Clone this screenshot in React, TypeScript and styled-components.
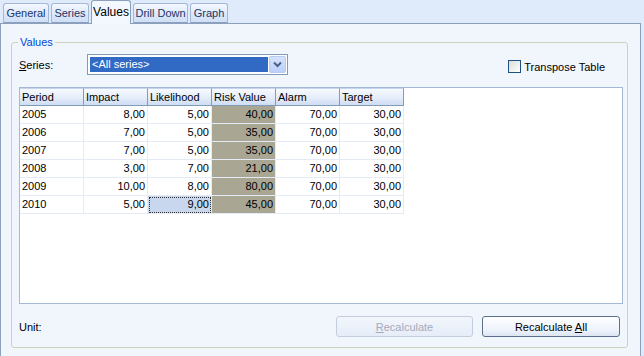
import styled, { createGlobalStyle } from "styled-components";

const GlobalStyle = createGlobalStyle`
  html, body {
    margin: 0;
    padding: 0;
    background: #dfeafb;
  }
  body {
    font-family: "Liberation Sans", Arial, sans-serif;
    font-size: 11px;
    color: #000;
  }
`;

const Window = styled.div`
  width: 644px;
  height: 356px;
  display: flex;
  flex-direction: column;
  background: #dfeafb;
  overflow: hidden;
`;

const TabStrip = styled.div`
  display: flex;
  align-items: flex-end;
  gap: 2px;
  height: 23px;
  padding-left: 3px;
  position: relative;
  z-index: 1;
`;

const Tab = styled.div<{ $w: number; $active?: boolean }>`
  box-sizing: border-box;
  width: ${(p) => p.$w}px;
  height: ${(p) => (p.$active ? 24 : 20)}px;
  margin-bottom: ${(p) => (p.$active ? -1 : 0)}px;
  display: flex;
  align-items: center;
  justify-content: center;
  padding-bottom: ${(p) => (p.$active ? 2 : 0)}px;
  border: 1px solid ${(p) => (p.$active ? "#8c9fbd" : "#a3b8d6")};
  border-bottom: ${(p) => (p.$active ? "none" : "1px solid #8c9fbd")};
  border-radius: 3px 3px 0 0;
  background: ${(p) =>
    p.$active
      ? "#f3f7fe"
      : "linear-gradient(#f4f8fe, #dbe7f9 60%, #cfdff6)"};
  color: ${(p) => (p.$active ? "#000" : "#1c3466")};
  font-size: ${(p) => (p.$active ? 12 : 11)}px;
`;

const Panel = styled.div`
  flex: 1;
  margin-right: 3px;
  background: #f1f6fd;
  border: 1px solid #8c9fbd;
  border-bottom: none;
  display: flex;
  flex-direction: column;
`;

const Group = styled.div`
  position: relative;
  margin: 18px 12px 0 10px;
  height: 306px;
  box-sizing: border-box;
  border: 1px solid #d0d0bf;
  border-radius: 3px;
  padding: 11px 0 0 7px;
  display: flex;
  flex-direction: column;
`;

const Legend = styled.span`
  position: absolute;
  top: -7px;
  left: 6px;
  padding: 0 2px;
  background: #f1f6fd;
  color: #0046d5;
  line-height: 13px;
`;

const SeriesRow = styled.div`
  display: flex;
  align-items: center;
  height: 21px;
`;

const FieldLabel = styled.label`
  width: 68px;
`;

const Combo = styled.div`
  box-sizing: border-box;
  width: 201px;
  height: 21px;
  border: 1px solid #7f9db9;
  background: #fff;
  display: flex;
  align-items: center;
  padding: 1px;
  gap: 1px;
`;

const ComboText = styled.div`
  flex: 1;
  height: 15px;
  margin-left: 1px;
  background: #316ac5;
  color: #fff;
  line-height: 15px;
  padding-left: 2px;
`;

const ComboButton = styled.div`
  box-sizing: border-box;
  width: 17px;
  height: 17px;
  border: 1px solid #b9cbf3;
  border-radius: 2px;
  background: linear-gradient(#d6e2fd, #bccffa);
  display: flex;
  align-items: center;
  justify-content: center;
`;

const CheckWrap = styled.label`
  margin-left: auto;
  margin-right: 22px;
  padding-top: 4px;
  display: flex;
  align-items: center;
  gap: 3px;
`;

const CheckBox = styled.span`
  box-sizing: border-box;
  width: 13px;
  height: 13px;
  border: 1px solid #1c5180;
  background: linear-gradient(135deg, #dcdcd7, #fff);
`;

const Grid = styled.div`
  box-sizing: border-box;
  margin-top: 12px;
  width: 604px;
  height: 217px;
  border: 1px solid #a5b9d5;
  background: #fff;
`;

const Row = styled.div`
  display: flex;
  height: 18px;
`;

const HeadCell = styled.div`
  box-sizing: border-box;
  width: 64px;
  height: 18px;
  border-right: 1px solid #7f9db9;
  border-bottom: 1px solid #7f9db9;
  border-top: 1px solid #c5d5ee;
  background: linear-gradient(#f7fafe, #e2ebf9 60%, #cfdcf3);
  padding-left: 2px;
  line-height: 16px;
`;

const Cell = styled.div<{ $kind?: "risk" | "sel"; $left?: boolean }>`
  box-sizing: border-box;
  width: 64px;
  height: 18px;
  line-height: 17px;
  text-align: ${(p) => (p.$left ? "left" : "right")};
  padding: ${(p) => (p.$left ? "0 0 0 2px" : "0 2px 0 0")};
  border-right: 1px solid #e4ebf6;
  border-bottom: 1px solid #e4ebf6;
  background: ${(p) =>
    p.$kind === "risk" ? "#a9a694" : p.$kind === "sel" ? "#c8d7ee" : "#fff"};
  outline: ${(p) => (p.$kind === "sel" ? "1px dotted #333" : "none")};
  outline-offset: -2px;
`;

const BottomRow = styled.div`
  display: flex;
  align-items: center;
  margin-top: 12px;
  height: 21px;
  padding-right: 7px;
`;

const Unit = styled.span`
  flex: 1;
`;

const Button = styled.button<{ $w: number }>`
  box-sizing: border-box;
  width: ${(p) => p.$w}px;
  height: 21px;
  margin-left: 9px;
  font: inherit;
  border: 1px solid #5c708e;
  border-radius: 3px;
  background: linear-gradient(#fdfeff, #eef3fb 70%, #dce5f2);
  color: #000;
  padding: 0;

  &:disabled {
    border-color: #c3cedd;
    background: linear-gradient(#f2f6fc, #e6edf8);
    color: #a3abbb;
  }
`;

const rows = [
  ["2005", "8,00", "5,00", "40,00", "70,00", "30,00"],
  ["2006", "7,00", "5,00", "35,00", "70,00", "30,00"],
  ["2007", "7,00", "5,00", "35,00", "70,00", "30,00"],
  ["2008", "3,00", "7,00", "21,00", "70,00", "30,00"],
  ["2009", "10,00", "8,00", "80,00", "70,00", "30,00"],
  ["2010", "5,00", "9,00", "45,00", "70,00", "30,00"],
];

const heads = ["Period", "Impact", "Likelihood", "Risk Value", "Alarm", "Target"];

export default function App() {
  return (
    <Window>
      <GlobalStyle />
      <TabStrip>
        <Tab $w={46}>General</Tab>
        <Tab $w={38}>Series</Tab>
        <Tab $w={40} $active>
          Values
        </Tab>
        <Tab $w={55}>Drill Down</Tab>
        <Tab $w={38}>Graph</Tab>
      </TabStrip>
      <Panel>
        <Group>
          <Legend>Values</Legend>
          <SeriesRow>
            <FieldLabel>
              <u>S</u>eries:
            </FieldLabel>
            <Combo>
              <ComboText>&lt;All series&gt;</ComboText>
              <ComboButton>
                <svg width="9" height="7" viewBox="0 0 9 7">
                  <polyline
                    points="1,1.5 4.5,5 8,1.5"
                    fill="none"
                    stroke="#4d6185"
                    strokeWidth="2"
                  />
                </svg>
              </ComboButton>
            </Combo>
            <CheckWrap>
              <CheckBox />
              Transpose Table
            </CheckWrap>
          </SeriesRow>
          <Grid>
            <Row>
              {heads.map((h) => (
                <HeadCell key={h}>{h}</HeadCell>
              ))}
            </Row>
            {rows.map((r, i) => (
              <Row key={r[0]}>
                {r.map((v, j) => (
                  <Cell
                    key={j}
                    $left={j === 0}
                    $kind={j === 3 ? "risk" : i === 5 && j === 2 ? "sel" : undefined}
                  >
                    {v}
                  </Cell>
                ))}
              </Row>
            ))}
          </Grid>
          <BottomRow>
            <Unit>Unit:</Unit>
            <Button $w={137} disabled>
              <u>R</u>ecalculate
            </Button>
            <Button $w={138}>
              Recalculate <u>A</u>ll
            </Button>
          </BottomRow>
        </Group>
      </Panel>
    </Window>
  );
}
